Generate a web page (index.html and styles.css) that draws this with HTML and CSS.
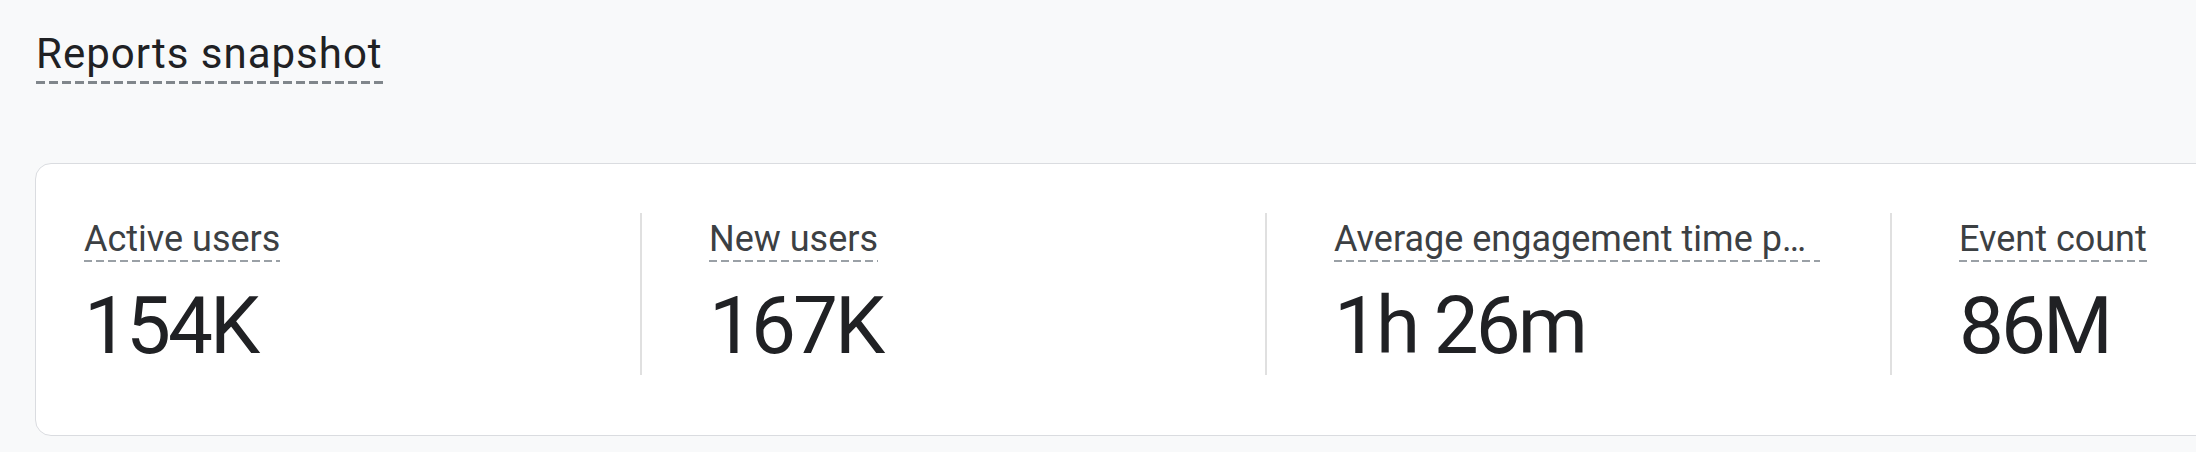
FILE: index.html
```html
<!DOCTYPE html>
<html lang="en">
<head>
<meta charset="utf-8">
<title>Reports snapshot</title>
<link rel="stylesheet" href="styles.css">
</head>
<body>
<main class="page">
  <h1 class="title"><span class="title-text">Reports snapshot</span></h1>
  <section class="card">
    <div class="metric">
      <div class="metric-label"><span class="metric-label-text">Active users</span></div>
      <div class="metric-value">154K</div>
    </div>
    <div class="metric metric-divided">
      <div class="metric-label"><span class="metric-label-text">New users</span></div>
      <div class="metric-value">167K</div>
    </div>
    <div class="metric metric-divided">
      <div class="metric-label"><span class="metric-label-text">Average engagement time per active user</span></div>
      <div class="metric-value">1h 26m</div>
    </div>
    <div class="metric metric-divided">
      <div class="metric-label"><span class="metric-label-text">Event count</span></div>
      <div class="metric-value">86M</div>
    </div>
  </section>
</main>
</body>
</html>
```

FILE: styles.css
```css
html, body {
  margin: 0;
  padding: 0;
  background: #f8f9fa;
  overflow: hidden;
}

body {
  font-family: Roboto, "Noto Sans", "Liberation Sans", sans-serif;
  color: #202124;
}

.page {
  padding: 30px 0 0 35px;
  width: 2600px;
}

.title {
  margin: 0 0 0 1px;
  font-size: 42px;
  font-weight: 400;
  line-height: 48px;
  letter-spacing: 1px;
}

.title-text {
  display: inline-block;
  padding-bottom: 6px;
  background-image: linear-gradient(to right, #80868b 0 9px, transparent 9px 13px);
  background-size: 13px 3px;
  background-repeat: repeat-x;
  background-position: left bottom;
}

.card {
  margin-top: 79px;
  display: grid;
  grid-template-columns: 556px repeat(3, 625px);
  width: 2480px;
  box-sizing: border-box;
  padding: 52px 0 60px 48px;
  background: #ffffff;
  border: 1px solid #dadce0;
  border-radius: 16px;
}

.metric {
  min-width: 0;
  padding: 0 70px 5px 0;
}

.metric-divided {
  border-left: 2px solid #e0e0e0;
  padding-left: 67px;
  margin-top: -3px;
  padding-top: 3px;
}

.metric-label {
  display: inline-block;
  max-width: 100%;
  vertical-align: top;
  font-size: 36px;
  line-height: 46px;
  color: #3c4043;
  white-space: nowrap;
  overflow: hidden;
  text-overflow: ellipsis;
}

.metric-label-text {
  padding-bottom: 2px;
  background-image: linear-gradient(to right, #9aa0a6 0 8px, transparent 8px 12px);
  background-size: 12px 2px;
  background-repeat: repeat-x;
  background-position: left bottom;
}

.metric-value {
  margin-top: 20px;
  font-size: 80px;
  line-height: 88px;
  letter-spacing: -3px;
  color: #202124;
}
```
